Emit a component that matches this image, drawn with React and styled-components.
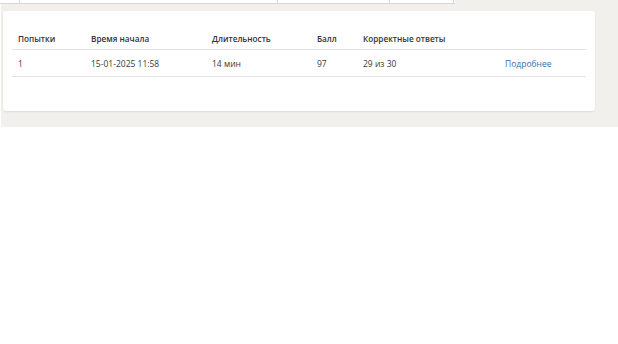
import React from 'react';
import styled, { createGlobalStyle } from 'styled-components';

const attempts = [
  { id: 1, start: '15-01-2025 11:58', duration: '14 мин', score: 97, correct: '29 из 30' }
];

const columns = [
  { title: 'Попытки', width: 73 },
  { title: 'Время начала', width: 121 },
  { title: 'Длительность', width: 105 },
  { title: 'Балл', width: 46 },
  { title: 'Корректные ответы', width: 142 },
  { title: '', width: 87 }
];

const stripCells = [20, 258, 112, 64];

function App() {
  return (
    <>
      <GlobalStyle />
      <Section>
        <TopStrip>
          {stripCells.map((w, i) => (
            <StripCell key={i} $width={w} />
          ))}
        </TopStrip>
        <Card>
          <Table>
            <colgroup>
              {columns.map((c, i) => (
                <col key={i} style={{ width: c.width }} />
              ))}
            </colgroup>
            <thead>
              <tr>
                {columns.map((c, i) => (
                  <HeadCell key={i}>{c.title}</HeadCell>
                ))}
              </tr>
            </thead>
            <tbody>
              {attempts.map(a => (
                <tr key={a.id}>
                  <Cell>{a.id}</Cell>
                  <Cell>{a.start}</Cell>
                  <Cell>{a.duration}</Cell>
                  <Cell>{a.score}</Cell>
                  <Cell>{a.correct}</Cell>
                  <Cell>
                    <DetailsLink href="#">Подробнее</DetailsLink>
                  </Cell>
                </tr>
              ))}
            </tbody>
          </Table>
        </Card>
      </Section>
    </>
  );
}

const GlobalStyle = createGlobalStyle`
  body {
    margin: 0;
    background: #ffffff;
    font-family: "Open Sans", "Noto Sans", sans-serif;
  }
`;

const Section = styled.div`
  margin-left: 1px;
  background: #f1f0ed;
  padding: 0 23px 16px 2px;
`;

const TopStrip = styled.div`
  display: flex;
  height: 3px;
  margin-left: -3px;
  width: 455px;
  background: #ffffff;
  border-bottom: 1px solid #d8d8d2;
`;

const StripCell = styled.div`
  width: ${p => p.$width}px;
  border-right: 1px solid #d8d8d2;
  box-sizing: border-box;
`;

const Card = styled.div`
  margin-top: 7px;
  background: #ffffff;
  border-radius: 3px;
  box-shadow: 0 1px 2px rgba(0, 0, 0, 0.08);
  padding: 16px 9px 34px;
`;

const Table = styled.table`
  width: 574px;
  border-collapse: collapse;
  table-layout: fixed;
  font-size: 8.5px;
`;

const HeadCell = styled.th`
  height: 22px;
  padding: 0 6px;
  text-align: left;
  font-size: 8.2px;
  font-weight: 600;
  color: #333333;
  border-bottom: 1px solid #e4e4e4;
  vertical-align: middle;
`;

const Cell = styled.td`
  height: 26px;
  padding: 0 6px;
  color: #3a3a3a;
  border-bottom: 1px solid #e4e4e4;
  vertical-align: middle;
`;

const DetailsLink = styled.a`
  color: #3c6da6;
  text-decoration: none;
`;

export default App;
